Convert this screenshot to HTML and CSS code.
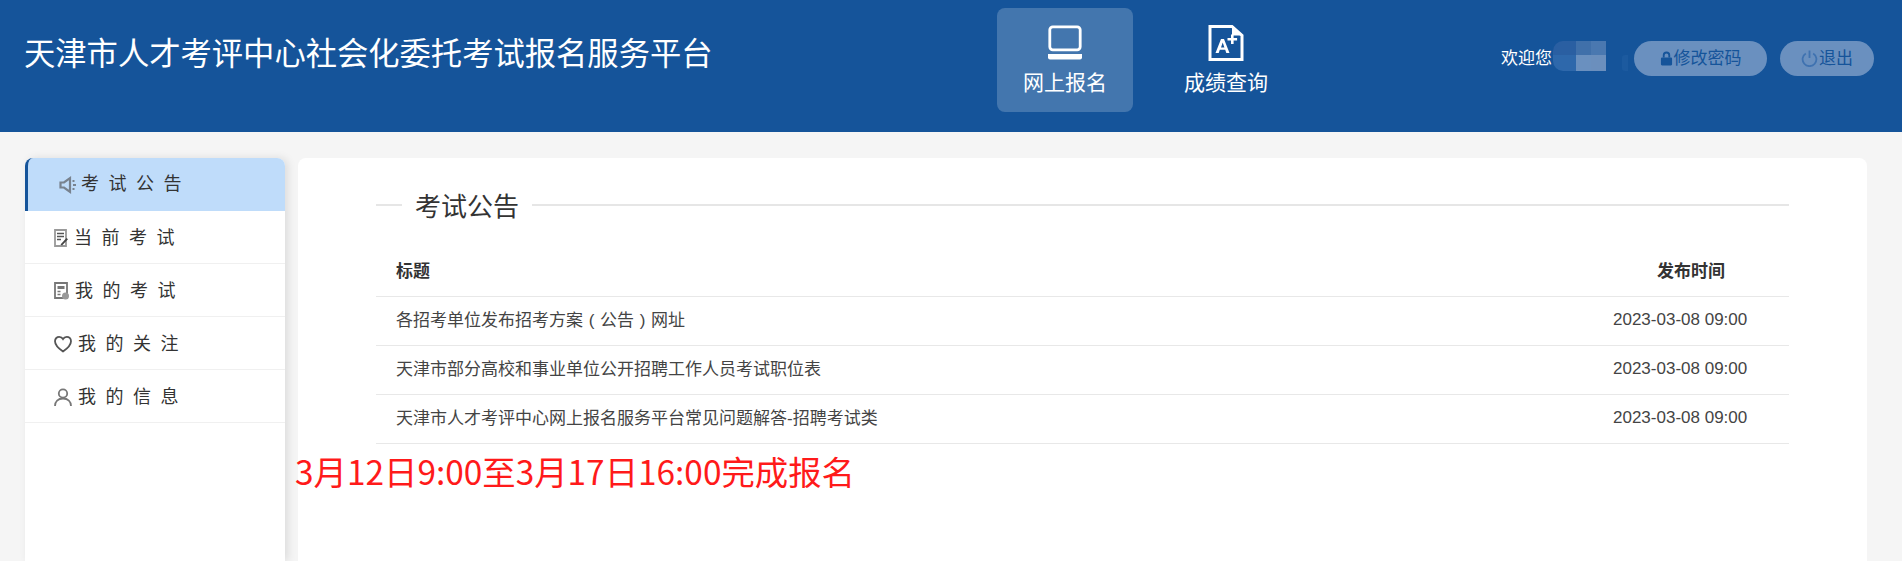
FILE: index.html
```html
<!DOCTYPE html>
<html lang="zh-CN">
<head>
    <meta charset="UTF-8">
    <title>天津市人才考评中心社会化委托考试报名服务平台</title>
    <link rel="stylesheet" href="styles.css">
</head>
<body>

    <!-- Header -->
    <div class="header">
        <h1 class="site-title">天津市人才考评中心社会化委托考试报名服务平台</h1>

        <div class="nav">
            <a class="nav-item active">
                <svg class="nav-icon" viewBox="0 0 36 36" width="36" height="36">
                    <rect x="2.800" y="1.800" width="30.400" height="23" rx="3" fill="none" stroke="#fff" stroke-width="2.800"/>
                    <path d="M1 29h34v3.500a2 2 0 0 1-2 2H3a2 2 0 0 1-2-2z" fill="#fff"/>
                </svg>
                <span>网上报名</span>
            </a>
            <a class="nav-item">
                <svg class="nav-icon" viewBox="0 0 36 36" width="36" height="36">
                    <path d="M2 1.500h22l10 9v24H2z" fill="none" stroke="#fff" stroke-width="3"/>
                    <path d="M24 1.500v9h10" fill="#fff"/>
                    <path d="M7.500 28l5.500-14h3l5.500 14h-3.200l-1.100-3.200h-5.400L10.700 28zm5.500-5.600h3.400l-1.700-5z" fill="#fff"/>
                    <path d="M23 9.500h2.600v3.500h3.500v2.600h-3.500v3.500H23v-3.500h-3.500V13H23z" fill="#fff"/>
                </svg>
                <span>成绩查询</span>
            </a>
        </div>

        <div class="user-box">
            <span class="welcome">欢迎您</span>
            <div class="mosaic">
                <i class="m1"></i><i class="m2"></i><i class="m3"></i>
                <i class="m4"></i><i class="m5"></i><i class="m6"></i>
            </div>
            <i class="mosaic-tail"></i>
            <a class="head-btn btn-pwd">
                <svg viewBox="0 0 14 16" width="13" height="15">
                    <path d="M3 7V4.500a4 4 0 0 1 8 0V7H9V4.500a2 2 0 0 0-4 0V7z" fill="#15549a"/>
                    <rect x="1" y="7" width="12" height="8.500" rx="1.200" fill="#15549a"/>
                </svg>修改密码
            </a>
            <a class="head-btn btn-exit">
                <svg viewBox="0 0 16 16" width="17" height="17">
                    <path d="M4.500 3.200a6.500 6.500 0 1 0 7 0" fill="none" stroke="#3f72b0" stroke-width="1.700"/>
                    <path d="M8 .5v7" stroke="#3f72b0" stroke-width="1.700"/>
                </svg>退出
            </a>
        </div>
    </div>

    <div class="content">
        <!-- Left menu -->
        <div class="sidebar">
            <a class="menu-item current">
                <svg viewBox="0 0 18 18" width="18" height="18">
                    <path d="M1.500 6.500h3.500L11 2.200v13.600L5 11.500H1.500z" fill="none" stroke="#78828e" stroke-width="2.200"/>
                    <path d="M13.500 5h2M14 9h3M13.500 13h2" stroke="#78828e" stroke-width="2"/>
                </svg>
                <span>考试公告</span>
            </a>
            <a class="menu-item">
                <svg viewBox="0 0 14 18" width="14" height="18">
                    <path d="M1 1h11v16H1z" fill="none" stroke="#999" stroke-width="1.800"/>
                    <path d="M3 4.500h7M3 7.500h7M3 10.500h4" stroke="#555" stroke-width="1.500"/>
                    <path d="M6.500 15.500l6-6.500 1.500 1.300-6 6.200z" fill="#444"/>
                </svg>
                <span>当前考试</span>
            </a>
            <a class="menu-item">
                <svg viewBox="0 0 15 18" width="15" height="18">
                    <path d="M1 1h12v15H1z" fill="none" stroke="#777" stroke-width="1.800"/>
                    <path d="M3.500 4h7v3h-7z" fill="#777"/>
                    <path d="M3.500 9.500h3M3.500 12.500h3" stroke="#777" stroke-width="1.500"/>
                    <circle cx="11.500" cy="14" r="3.500" fill="#999"/>
                </svg>
                <span>我的考试</span>
            </a>
            <a class="menu-item">
                <svg viewBox="0 0 18 18" width="18" height="18">
                    <path d="M9 16.500C4 13 1 10 1 6.200 1 3.500 3 1.800 5.200 1.800 6.800 1.800 8.200 2.600 9 4c.8-1.400 2.200-2.200 3.800-2.200C15 1.800 17 3.500 17 6.200 17 10 14 13 9 16.500z" fill="none" stroke="#555" stroke-width="1.800"/>
                </svg>
                <span>我的关注</span>
            </a>
            <a class="menu-item">
                <svg viewBox="0 0 18 18" width="18" height="18">
                    <circle cx="9" cy="5.500" r="4.200" fill="none" stroke="#777" stroke-width="1.800"/>
                    <path d="M1 18c0-4.500 3-7.500 8-7.500s8 3 8 7.500" fill="none" stroke="#777" stroke-width="1.800"/>
                </svg>
                <span>我的信息</span>
            </a>
        </div>

        <!-- Notices -->
        <div class="main">
            <div class="notice-box">
                <div class="section-title"><span>考试公告</span></div>
                <table class="notice-table">
                    <thead>
                        <tr>
                            <th>标题</th>
                            <th class="col-time">发布时间</th>
                        </tr>
                    </thead>
                    <tbody>
                        <tr>
                            <td>各招考单位发布招考方案<span class="paren">(</span>公告<span class="paren">)</span>网址</td>
                            <td class="col-date">2023-03-08 09:00</td>
                        </tr>
                        <tr>
                            <td>天津市部分高校和事业单位公开招聘工作人员考试职位表</td>
                            <td class="col-date">2023-03-08 09:00</td>
                        </tr>
                        <tr>
                            <td>天津市人才考评中心网上报名服务平台常见问题解答-招聘考试类</td>
                            <td class="col-date">2023-03-08 09:00</td>
                        </tr>
                    </tbody>
                </table>
            </div>
            <p class="red-note">3月12日9:00至3月17日16:00完成报名</p>
        </div>
    </div>

</body>
</html>
```

FILE: styles.css
```css
* {
    margin: 0;
    padding: 0;
    box-sizing: border-box;
}

html, body {
    height: 100%;
}

body {
    font-family: "Liberation Sans", "Noto Sans CJK SC", sans-serif;
    background: #f5f5f5;
    color: #333;
    display: flex;
    flex-direction: column;
    overflow: hidden;
}

.header {
    flex: none;
    height: 132px;
    background: #15549a;
    color: #fff;
    display: flex;
    align-items: flex-start;
    padding-left: 24px;
}

.site-title {
    width: 973px;
    font-size: 31.300px;
    font-weight: 400;
    line-height: 42px;
    padding-top: 34px;
}

.nav {
    display: flex;
    gap: 25px;
    padding-top: 8px;
}

.nav-item {
    width: 136px;
    height: 104px;
    border-radius: 8px;
    display: flex;
    flex-direction: column;
    align-items: center;
    padding-top: 17px;
    font-size: 21px;
    line-height: 28px;
}

.nav-item.active {
    background: rgba(255, 255, 255, 0.2);
}

.nav-icon {
    display: block;
    margin-bottom: 8px;
}

.user-box {
    margin-left: auto;
    padding: 41px 28px 0 0;
    display: flex;
    align-items: flex-start;
}

.welcome {
    font-size: 17px;
    line-height: 36px;
}

.mosaic {
    width: 53px;
    height: 30px;
    margin-left: 1px;
    display: grid;
    grid-template-columns: 23px 15px 15px;
    grid-template-rows: 14px 16px;
    border-radius: 10px 0 0 10px;
    overflow: hidden;
}

.mosaic-tail {
    width: 6px;
    height: 16px;
    margin: 14px 6px 0 16px;
    border-radius: 3px 0 0 3px;
    background: #1c5a9f;
}

.m1 { background: #2a5fa2; }
.m2 { background: #4070aa; }
.m3 { background: #4a78b0; }
.m4 { background: #2e68ab; }
.m5 { background: #6a90bf; }
.m6 { background: #6b8fbd; }

.head-btn {
    height: 35px;
    border-radius: 18px;
    background: #6a90bf;
    color: #15549a;
    font-size: 17px;
    line-height: 35px;
    display: flex;
    align-items: center;
    justify-content: center;
}

.head-btn svg {
    margin-right: 1px;
}

.btn-pwd {
    width: 133px;
    margin-right: 13px;
}

.btn-exit {
    width: 94px;
}

.content {
    flex: 1;
    min-height: 0;
    display: flex;
    gap: 13px;
    padding: 26px 35px 0 25px;
}

.sidebar {
    width: 260px;
    background: #fff;
    border-radius: 8px 8px 0 0;
    box-shadow: 3px 0 8px rgba(0, 0, 0, 0.1);
}

.menu-item {
    height: 53px;
    padding: 0 0 3px 29px;
    display: flex;
    align-items: center;
    gap: 6px;
    font-size: 18px;
    letter-spacing: 9.500px;
    border-bottom: 1px solid #f0f0f0;
}

.menu-item svg {
    flex: none;
    margin-top: 5px;
}

.menu-item.current {
    padding: 0 0 5px 31px;
    gap: 4px;
    background: #bfdcfa;
    border-left: 3px solid #15549a;
    border-bottom: none;
    border-radius: 8px 8px 0 0;
}

.menu-item.current svg {
    margin-top: 6px;
}

.main {
    flex: 1;
    background: #fff;
    border-radius: 8px 8px 0 0;
    padding-top: 29px;
}

.notice-box {
    margin: 0 78px;
}

.section-title {
    height: 36px;
    display: flex;
    align-items: center;
    font-size: 26px;
    color: #333;
    margin-bottom: 24px;
}

.section-title::before,
.section-title::after {
    content: "";
    height: 2px;
    background: #e6e6e6;
}

.section-title::before {
    width: 26px;
}

.section-title::after {
    flex: 1;
}

.section-title span {
    padding: 0 13px;
    margin-top: -2px;
}

.notice-table {
    width: 100%;
    border-collapse: collapse;
    font-size: 17px;
}

.notice-table th,
.notice-table td {
    height: 49px;
    text-align: left;
    padding: 0 0 5px 20px;
    border-bottom: 1px solid #e8e8e8;
}

.notice-table th {
    font-weight: 700;
    padding-bottom: 3px;
}

.notice-table td {
    color: #444;
}

.notice-table .col-time {
    width: 176px;
    padding-left: 44px;
}

.notice-table .col-date {
    padding: 0 0 1px 0;
    white-space: nowrap;
}

.paren {
    display: inline-block;
    width: 1em;
    text-align: center;
}

.red-note {
    margin-left: -3px;
    font-family: "Noto Sans CJK SC", sans-serif;
    font-size: 33.400px;
    line-height: 54px;
    color: #ff1a1a;
    white-space: nowrap;
}
```
